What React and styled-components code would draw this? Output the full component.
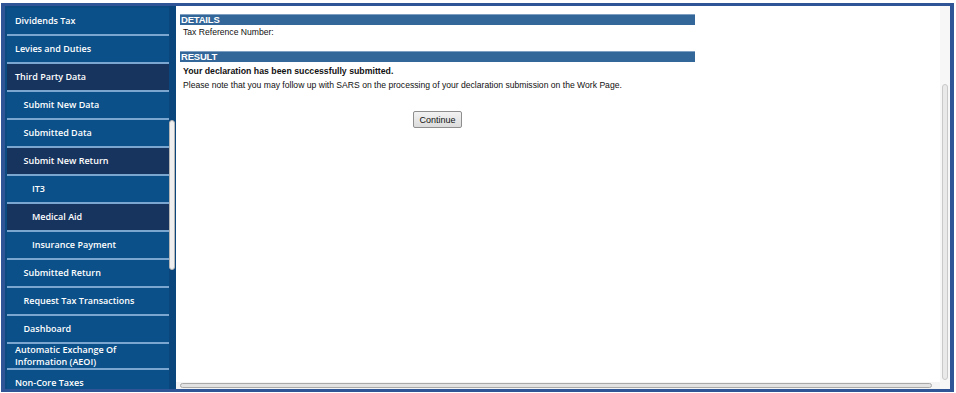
import React from "react";
import styled, { createGlobalStyle } from "styled-components";

const GlobalStyle = createGlobalStyle`
  body{
    margin:0;
    background:#fff;
  }
`

const menu = [
  { label: "Dividends Tax", level: 0 },
  { label: "Levies and Duties", level: 0 },
  { label: "Third Party Data", level: 0, active: true },
  { label: "Submit New Data", level: 1 },
  { label: "Submitted Data", level: 1 },
  { label: "Submit New Return", level: 1, active: true },
  { label: "IT3", level: 2 },
  { label: "Medical Aid", level: 2, active: true },
  { label: "Insurance Payment", level: 2 },
  { label: "Submitted Return", level: 1 },
  { label: "Request Tax Transactions", level: 1 },
  { label: "Dashboard", level: 1 },
  { label: "Automatic Exchange Of Information (AEOI)", level: 0, tall: true },
  { label: "Non-Core Taxes", level: 0 },
]

const App = () => {
  return (
    <>
      <GlobalStyle />
      <Frame>
        <Sidebar>
          <NavList>
            {menu.map((m) => (
              <NavItem key={m.label} $level={m.level} $active={m.active} $tall={m.tall}>
                <span>{m.label}</span>
              </NavItem>
            ))}
          </NavList>
          <SideTrack>
            <SideThumb />
          </SideTrack>
        </Sidebar>
        <Main>
          <MainRow>
            <Content>
              <Block>
                <SectionBar>DETAILS</SectionBar>
                <Line>Tax Reference Number:</Line>
                <SectionBar $gap>RESULT</SectionBar>
                <Line $bold>Your declaration has been successfully submitted.</Line>
                <Line>Please note that you may follow up with SARS on the processing of your declaration submission on the Work Page.</Line>
                <ButtonRow>
                  <Button>Continue</Button>
                </ButtonRow>
              </Block>
            </Content>
            <VTrack>
              <VThumb />
            </VTrack>
          </MainRow>
          <HRow>
            <HTrack>
              <HThumb />
            </HTrack>
            <Corner />
          </HRow>
        </Main>
      </Frame>
    </>
  )
}

const Frame = styled.div`
  box-sizing:border-box;
  margin:3px 0 0 1px;
  width:953px;
  height:389px;
  border:4px solid #2f5597;
  border-top-width:3px;
  border-bottom-width:3px;
  display:flex;
  overflow:hidden;
`

const Sidebar = styled.div`
  width:171px;
  flex:none;
  display:flex;
  background:#0b4b82;
`

const NavList = styled.div`
  width:162px;
  padding:2px 0 0 2px;
  display:flex;
  flex-direction:column;
`

const NavItem = styled.div`
  flex:none;
  box-sizing:border-box;
  height:${p => p.$tall ? "26px" : "28px"};
  border-bottom:2px solid #7aa6d0;
  background:${p => p.$active ? "#17345e" : "#0b5089"};
  display:flex;
  align-items:center;
  padding-left:${p => 8 + p.$level * 8.5}px;
  padding-right:6px;
  color:#fff;
  font-family:"Open Sans", "Noto Sans", sans-serif;
  font-size:9px;
  font-weight:600;
  line-height:12px;
  span{
    display:block;
  }
`

const SideTrack = styled.div`
  width:7px;
  flex:none;
  padding-top:114px;
  background:#0a467b;
`

const SideThumb = styled.div`
  box-sizing:border-box;
  width:6px;
  height:150px;
  background:#efefef;
  border:1px solid #b5b5b5;
  border-radius:3px;
`

const Main = styled.div`
  flex:1;
  display:flex;
  flex-direction:column;
  background:#fff;
`

const MainRow = styled.div`
  flex:1;
  display:flex;
`

const Content = styled.div`
  flex:1;
  padding:8px 0 0 4px;
`

const Block = styled.div`
  width:515px;
  font-family:"Liberation Sans", Arial, sans-serif;
  color:#111;
`

const SectionBar = styled.div`
  height:10px;
  margin-top:${p => p.$gap ? "12px" : "0"};
  background:#336699;
  border-top:1px solid #7f9fc2;
  color:#fff;
  font-weight:bold;
  font-size:9.5px;
  line-height:10px;
  padding-left:1px;
  letter-spacing:-0.2px;
`

const Line = styled.div`
  padding-left:3px;
  font-size:${p => p.$bold ? "8.75px" : "8.6px"};
  font-weight:${p => p.$bold ? "bold" : "normal"};
  line-height:14px;
  margin-top:${p => p.$bold ? "2px" : "0"};
`

const ButtonRow = styled.div`
  display:flex;
  justify-content:center;
  margin-top:19px;
`

const Button = styled.button`
  box-sizing:border-box;
  width:49px;
  height:17px;
  padding:0;
  font-family:"Liberation Sans", Arial, sans-serif;
  font-size:9px;
  color:#111;
  background:linear-gradient(#f2f2f2, #dcdcdc);
  border:1px solid #8e8e8e;
  border-radius:2px;
`

const VTrack = styled.div`
  width:10px;
  flex:none;
  background:#f7f7f7;
  display:flex;
  flex-direction:column;
  padding-top:78px;
  padding-bottom:2px;
  box-sizing:border-box;
`

const VThumb = styled.div`
  flex:1;
  margin-left:2px;
  width:6px;
  box-sizing:border-box;
  background:#e9e9e9;
  border:1px solid #c9c9c9;
  border-radius:3px;
`

const HRow = styled.div`
  height:7px;
  display:flex;
`

const HTrack = styled.div`
  flex:1;
  background:#f4f4f4;
  padding:1px 8px 1px 4px;
`

const HThumb = styled.div`
  height:5px;
  box-sizing:border-box;
  background:#e2e2e2;
  border:1px solid #a9a9a9;
  border-radius:3px;
`

const Corner = styled.div`
  width:10px;
  background:#f7f7f7;
`

export default App
